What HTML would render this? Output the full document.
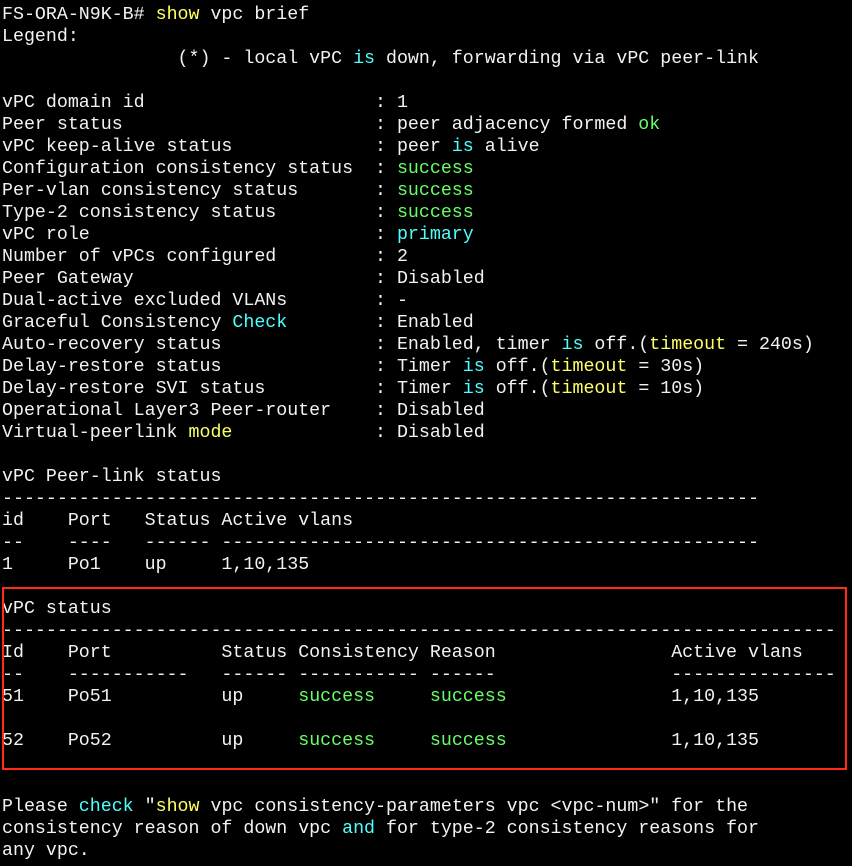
<!DOCTYPE html>
<html><head><meta charset="utf-8"><style>
html,body{margin:0;padding:0;background:#000;width:852px;height:866px;overflow:hidden}
pre{margin:0;padding:4px 0 0 2px;font-family:"Liberation Mono","DejaVu Sans Mono",monospace;font-size:18.3px;line-height:22px;color:#f2f2f2;white-space:pre}
.y{color:#ffff66}.c{color:#4dffff}.g{color:#66ff66}
.box{position:absolute;left:2px;top:587px;width:841px;height:179px;border:2px solid #ff2a1a}
</style></head><body>
<div class="box"></div>
<pre>FS-ORA-N9K-B# <span class="y">show</span> vpc brief
Legend:
                (*) - local vPC <span class="c">is</span> down, forwarding via vPC peer-link

vPC domain id                     : 1
Peer status                       : peer adjacency formed <span class="g">ok</span>
vPC keep-alive status             : peer <span class="c">is</span> alive
Configuration consistency status  : <span class="g">success</span>
Per-vlan consistency status       : <span class="g">success</span>
Type-2 consistency status         : <span class="g">success</span>
vPC role                          : <span class="c">primary</span>
Number of vPCs configured         : 2
Peer Gateway                      : Disabled
Dual-active excluded VLANs        : -
Graceful Consistency <span class="c">Check</span>        : Enabled
Auto-recovery status              : Enabled, timer <span class="c">is</span> off.(<span class="y">timeout</span> = 240s)
Delay-restore status              : Timer <span class="c">is</span> off.(<span class="y">timeout</span> = 30s)
Delay-restore SVI status          : Timer <span class="c">is</span> off.(<span class="y">timeout</span> = 10s)
Operational Layer3 Peer-router    : Disabled
Virtual-peerlink <span class="y">mode</span>             : Disabled

vPC Peer-link status
---------------------------------------------------------------------
id    Port   Status Active vlans
--    ----   ------ -------------------------------------------------
1     Po1    up     1,10,135

vPC status
----------------------------------------------------------------------------
Id    Port          Status Consistency Reason                Active vlans
--    -----------   ------ ----------- ------                ---------------
51    Po51          up     <span class="g">success</span>     <span class="g">success</span>               1,10,135

52    Po52          up     <span class="g">success</span>     <span class="g">success</span>               1,10,135


Please <span class="c">check</span> "<span class="y">show</span> vpc consistency-parameters vpc &lt;vpc-num&gt;" for the
consistency reason of down vpc <span class="c">and</span> for type-2 consistency reasons for
any vpc.</pre>
</body></html>
